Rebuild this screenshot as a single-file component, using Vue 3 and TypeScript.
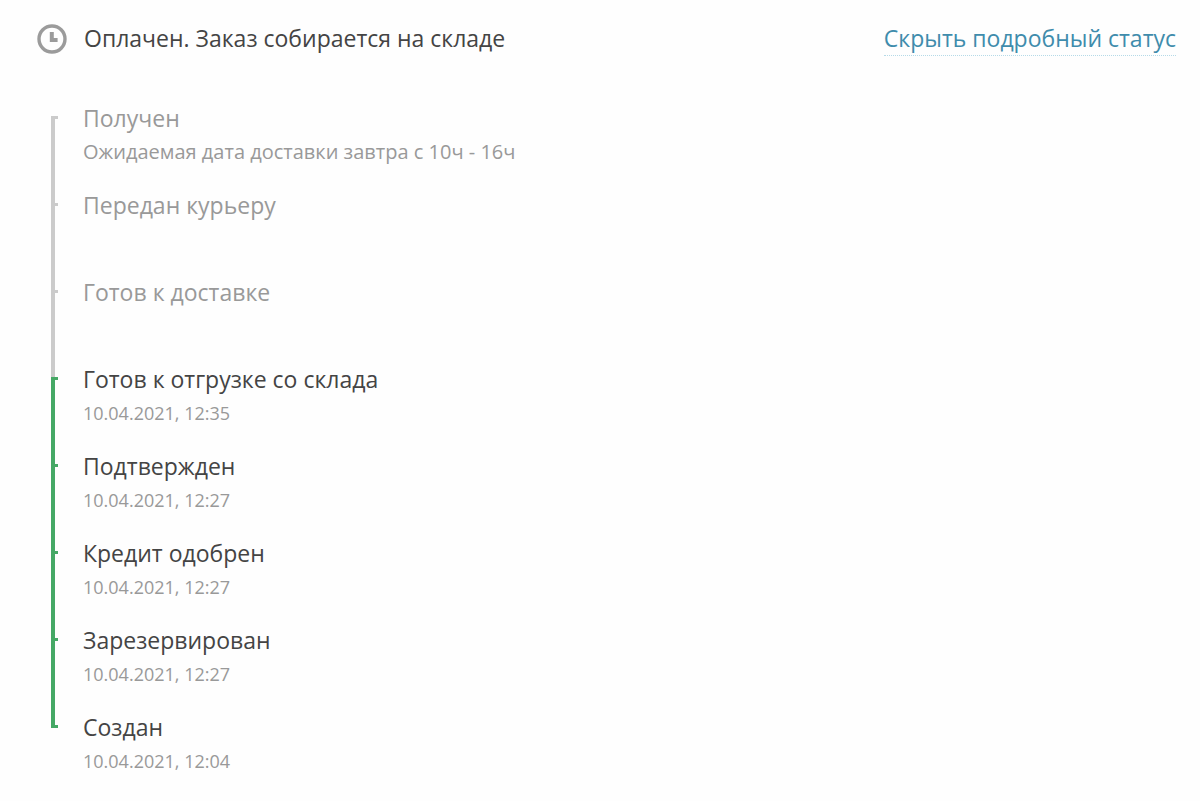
<script setup lang="ts">
import { ref } from 'vue'

interface Step {
  title: string
  note?: string
  date?: string
  done: boolean
}

const steps: Step[] = [
  { title: 'Получен', note: 'Ожидаемая дата доставки завтра с 10ч - 16ч', done: false },
  { title: 'Передан курьеру', done: false },
  { title: 'Готов к доставке', done: false },
  { title: 'Готов к отгрузке со склада', date: '10.04.2021, 12:35', done: true },
  { title: 'Подтвержден', date: '10.04.2021, 12:27', done: true },
  { title: 'Кредит одобрен', date: '10.04.2021, 12:27', done: true },
  { title: 'Зарезервирован', date: '10.04.2021, 12:27', done: true },
  { title: 'Создан', date: '10.04.2021, 12:04', done: true },
]

const expanded = ref(true)
</script>

<template>
  <section class="order">
    <header class="head">
      <svg class="clock" viewBox="0 0 32 32" aria-hidden="true">
        <circle cx="16" cy="16" r="13" fill="none" stroke="#9b9b9b" stroke-width="3.4" />
        <path d="M15.8 9v8h5.8" fill="none" stroke="#9b9b9b" stroke-width="4" />
      </svg>
      <h1 class="status">Оплачен. Заказ собирается на складе</h1>
      <a href="#" class="toggle" @click.prevent="expanded = !expanded">
        {{ expanded ? 'Скрыть подробный статус' : 'Показать подробный статус' }}
      </a>
    </header>

    <ol v-if="expanded" class="steps">
      <li v-for="step in steps" :key="step.title" class="step" :class="{ done: step.done }">
        <span class="rail"></span>
        <div class="text">
          <p class="title">{{ step.title }}</p>
          <p v-if="step.note" class="note">{{ step.note }}</p>
          <time v-if="step.date" class="date">{{ step.date }}</time>
        </div>
      </li>
    </ol>
  </section>
</template>

<style>
body {
  margin: 0;
  background: #fefefe;
}
</style>

<style scoped>
.order {
  padding: 23px 24px 24px 36px;
  font-family: 'Open Sans', 'Noto Sans', sans-serif;
  color: #444444;
}

.head {
  display: flex;
  align-items: flex-start;
  height: 32px;
}

.clock {
  width: 32px;
  height: 32px;
  margin-right: 16px;
}

.status {
  margin: 0;
  font-size: 23px;
  font-weight: 400;
  line-height: 30px;
}

.toggle {
  margin-left: auto;
  padding-bottom: 2px;
  border-bottom: 1px dotted #b5dae8;
  font-size: 23px;
  line-height: 30px;
  color: #3f8cac;
  text-decoration: none;
}

.steps {
  margin: 48px 0 0;
  padding: 0 0 0 15px;
  list-style: none;
}

.step {
  display: flex;
  gap: 25px;
  height: 87px;
  color: #999999;
}

.rail {
  box-sizing: border-box;
  width: 7px;
  height: 87px;
  margin-top: 13px;
  border-left: 4px solid #cbcbcb;
}

.rail::before {
  content: '';
  display: block;
  height: 3px;
  background: #cbcbcb;
}

.done .rail {
  border-left-color: #45a865;
}

.done .rail::before {
  background: #45a865;
}

.step:last-child .rail {
  height: 3px;
}

.title {
  margin: 0;
  font-size: 23px;
  line-height: 30px;
}

.done .title {
  color: #444444;
}

.note,
.date {
  display: block;
  margin: 5px 0 0;
  line-height: 28px;
  color: #999999;
}

.note {
  font-size: 20px;
}

.date {
  font-size: 18px;
}
</style>
